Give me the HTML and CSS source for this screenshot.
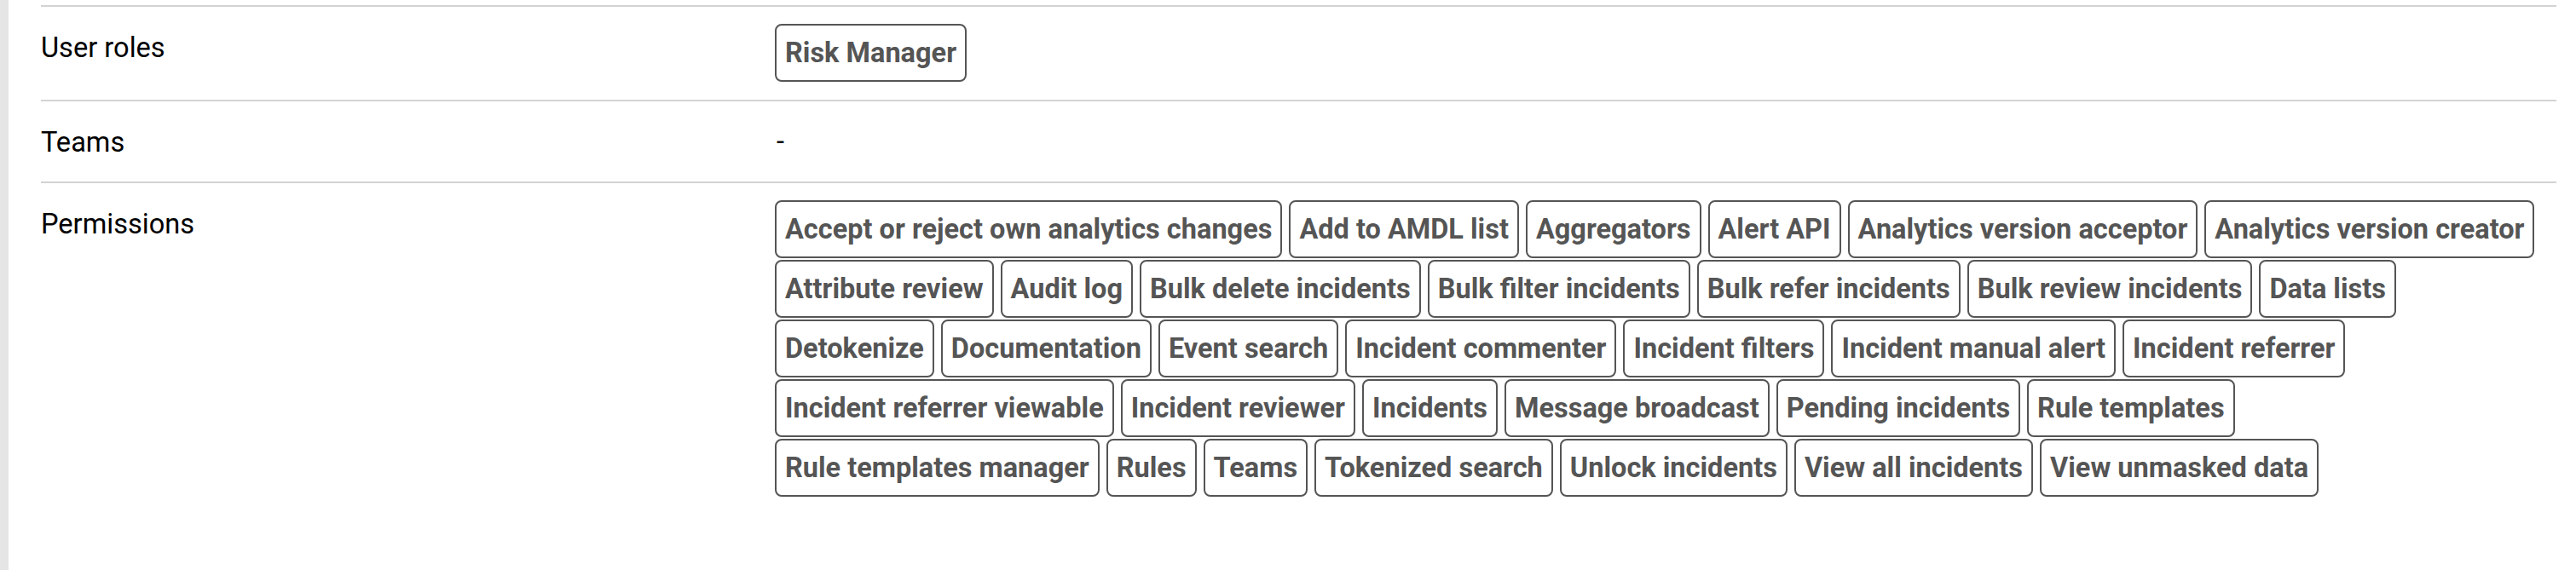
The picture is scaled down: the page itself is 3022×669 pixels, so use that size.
FILE: index.html
```html
<!DOCTYPE html>
<html lang="en">
<head>
<meta charset="utf-8">
<title>User details</title>
<link rel="stylesheet" href="styles.css">
</head>
<body>
<div class="page">
  <div class="sidebar"></div>
  <div class="content">
    <div class="row">
      <div class="label">User roles</div>
      <div class="value tags">
        <span class="tag">Risk Manager</span>
      </div>
    </div>
    <div class="row">
      <div class="label">Teams</div>
      <div class="value text">-</div>
    </div>
    <div class="row">
      <div class="label">Permissions</div>
      <div class="value tags">
        <span class="tag">Accept or reject own analytics changes</span>
        <span class="tag">Add to AMDL list</span>
        <span class="tag">Aggregators</span>
        <span class="tag">Alert API</span>
        <span class="tag">Analytics version acceptor</span>
        <span class="tag">Analytics version creator</span>
        <span class="tag">Attribute review</span>
        <span class="tag">Audit log</span>
        <span class="tag">Bulk delete incidents</span>
        <span class="tag">Bulk filter incidents</span>
        <span class="tag">Bulk refer incidents</span>
        <span class="tag">Bulk review incidents</span>
        <span class="tag">Data lists</span>
        <span class="tag">Detokenize</span>
        <span class="tag">Documentation</span>
        <span class="tag">Event search</span>
        <span class="tag">Incident commenter</span>
        <span class="tag">Incident filters</span>
        <span class="tag">Incident manual alert</span>
        <span class="tag">Incident referrer</span>
        <span class="tag">Incident referrer viewable</span>
        <span class="tag">Incident reviewer</span>
        <span class="tag">Incidents</span>
        <span class="tag">Message broadcast</span>
        <span class="tag">Pending incidents</span>
        <span class="tag">Rule templates</span>
        <span class="tag">Rule templates manager</span>
        <span class="tag">Rules</span>
        <span class="tag">Teams</span>
        <span class="tag">Tokenized search</span>
        <span class="tag">Unlock incidents</span>
        <span class="tag">View all incidents</span>
        <span class="tag">View unmasked data</span>
      </div>
    </div>
  </div>
</div>
</body>
</html>
```
FILE: styles.css
```css
html, body {
  margin: 0;
  padding: 0;
  background: #ffffff;
}

body {
  font-family: Roboto, "Liberation Sans", Arial, sans-serif;
  font-size: 32.6px;
  line-height: 48px;
  color: #000000;
}

.page {
  display: flex;
  min-height: 100vh;
}

.sidebar {
  width: 10px;
  flex: none;
  background: #e5e5e5;
}

.content {
  flex: 1;
  padding: 6px 23px 0 38px;
}

.row {
  display: flex;
  border-top: 2px solid #d3d3d3;
  padding: 20px 0 19px;
}

.label {
  width: 861px;
  flex: none;
  padding-top: 4px;
  font-weight: 400;
}

.value {
  flex: 1;
  min-width: 0;
}

.value.text {
  padding: 3px 0 4px 2px;
}

.tags {
  display: flex;
  flex-wrap: wrap;
  align-content: flex-start;
}

.tag {
  display: inline-block;
  box-sizing: border-box;
  height: 68px;
  padding: 8px 10px;
  margin: 0 8px 2px 0;
  border: 2px solid #555555;
  border-radius: 8px;
  font-size: 32.5px;
  font-weight: 700;
  color: #555555;
  white-space: nowrap;
}
```
